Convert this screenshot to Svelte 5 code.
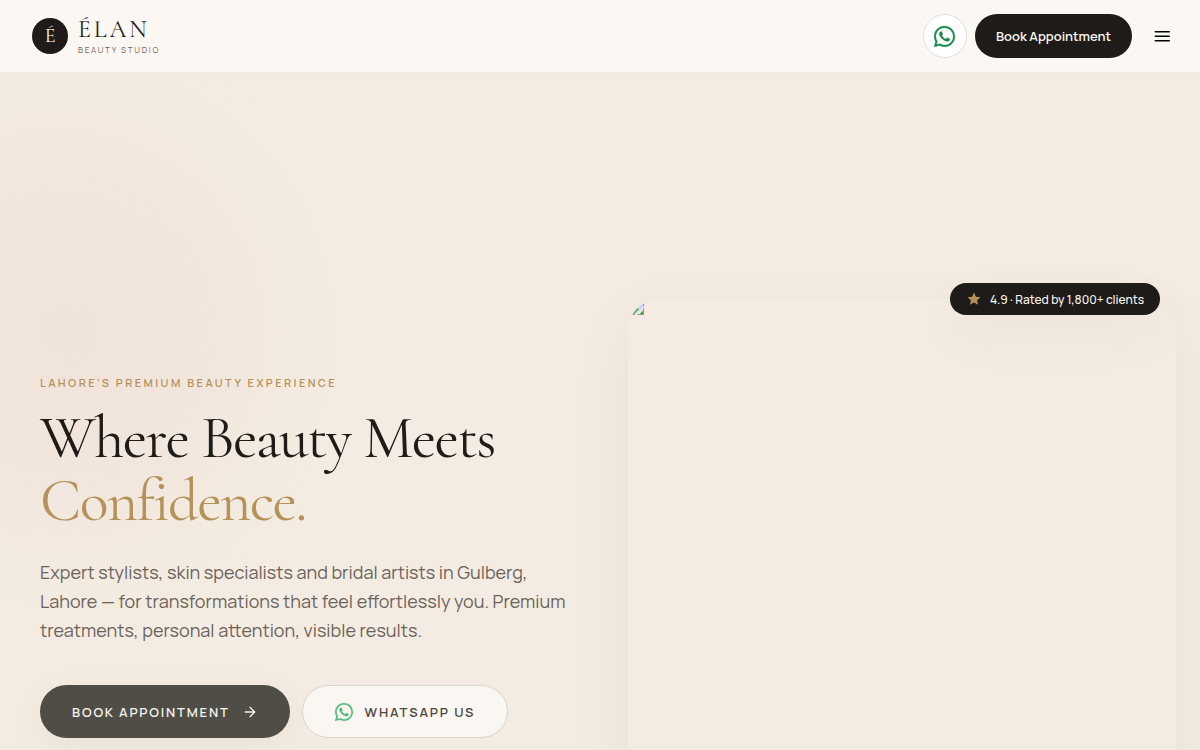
<script lang="ts">
  const brand = { initial: 'É', name: 'ÉLAN', tagline: 'Beauty Studio' };
  const rating = '4.9 · Rated by 1,800+ clients';

  let menuOpen = false;

  function toggleMenu() {
    menuOpen = !menuOpen;
  }
</script>

<svelte:head>
  <title>Élan Beauty Studio</title>
</svelte:head>

<div class="page">
  <header class="header">
    <a class="brand" href="#home">
      <span class="brand-mark">{brand.initial}</span>
      <span class="brand-text">
        <span class="brand-name">{brand.name}</span>
        <span class="brand-tagline">{brand.tagline}</span>
      </span>
    </a>

    <nav class="actions">
      <a class="icon-button" href="#whatsapp" aria-label="WhatsApp">
        <svg class="whatsapp" viewBox="0 0 24 24" width="21" height="21">
          <path
            d="M17.47 14.38c-.3-.15-1.76-.87-2.03-.97-.27-.1-.47-.15-.67.15-.2.3-.77.97-.94 1.16-.17.2-.35.22-.64.08-.3-.15-1.26-.47-2.39-1.48-.88-.79-1.48-1.76-1.65-2.06-.17-.3-.02-.46.13-.6.13-.14.3-.35.45-.53.15-.17.2-.3.3-.5.1-.2.05-.37-.03-.52-.07-.15-.67-1.61-.91-2.21-.24-.58-.49-.5-.67-.51l-.57-.01c-.2 0-.52.07-.79.37-.27.3-1.04 1.02-1.04 2.48s1.07 2.88 1.21 3.07c.15.2 2.1 3.2 5.08 4.49.71.31 1.26.49 1.69.63.71.22 1.36.19 1.87.12.57-.09 1.76-.72 2.01-1.41.25-.7.25-1.29.17-1.42-.07-.12-.27-.2-.57-.34M12.05 21.79a9.87 9.87 0 0 1-5.03-1.38l-.36-.22-3.74.98 1-3.65-.24-.37a9.86 9.86 0 0 1-1.51-5.26c0-5.45 4.44-9.88 9.89-9.88a9.82 9.82 0 0 1 6.99 2.9 9.83 9.83 0 0 1 2.89 6.99c0 5.45-4.44 9.89-9.89 9.89M20.46 3.49A11.82 11.82 0 0 0 12.05 0C5.5 0 .16 5.34.16 11.89c0 2.1.55 4.14 1.59 5.95L.06 24l6.3-1.65a11.88 11.88 0 0 0 5.69 1.45c6.55 0 11.89-5.34 11.89-11.9a11.82 11.82 0 0 0-3.48-8.41"
          />
        </svg>
      </a>
      <button class="book-small" type="button">Book Appointment</button>
      <button class="menu" type="button" aria-label="Menu" aria-expanded={menuOpen} on:click={toggleMenu}>
        <svg viewBox="0 0 20 20" width="20" height="20">
          <path d="M3.300 5.800h14M3.300 10.300h14M3.300 14.800h14" />
        </svg>
      </button>
    </nav>
  </header>

  <main class="hero" id="home">
    <section class="copy">
      <p class="eyebrow">Lahore's Premium Beauty Experience</p>
      <h1>Where Beauty Meets <em>Confidence.</em></h1>
      <p class="lead">
        Expert stylists, skin specialists and bridal artists in Gulberg, Lahore — for
        transformations that feel effortlessly you. Premium treatments, personal attention,
        visible results.
      </p>
      <div class="cta">
        <a class="button dark" href="#book">
          Book Appointment
          <svg class="arrow" viewBox="0 0 24 24" width="16" height="16">
            <path d="M5 12h14M12 5l7 7-7 7" />
          </svg>
        </a>
        <a class="button light" href="#whatsapp">
          <svg class="whatsapp" viewBox="0 0 24 24" width="18" height="18">
            <path
              d="M17.47 14.38c-.3-.15-1.76-.87-2.03-.97-.27-.1-.47-.15-.67.15-.2.3-.77.97-.94 1.16-.17.2-.35.22-.64.08-.3-.15-1.26-.47-2.39-1.48-.88-.79-1.48-1.76-1.65-2.06-.17-.3-.02-.46.13-.6.13-.14.3-.35.45-.53.15-.17.2-.3.3-.5.1-.2.05-.37-.03-.52-.07-.15-.67-1.61-.91-2.21-.24-.58-.49-.5-.67-.51l-.57-.01c-.2 0-.52.07-.79.37-.27.3-1.04 1.02-1.04 2.48s1.07 2.88 1.21 3.07c.15.2 2.1 3.2 5.08 4.49.71.31 1.26.49 1.69.63.71.22 1.36.19 1.87.12.57-.09 1.76-.72 2.01-1.41.25-.7.25-1.29.17-1.42-.07-.12-.27-.2-.57-.34M12.05 21.79a9.87 9.87 0 0 1-5.03-1.38l-.36-.22-3.74.98 1-3.65-.24-.37a9.86 9.86 0 0 1-1.51-5.26c0-5.45 4.44-9.88 9.89-9.88a9.82 9.82 0 0 1 6.99 2.9 9.83 9.83 0 0 1 2.89 6.99c0 5.45-4.44 9.89-9.89 9.89M20.46 3.49A11.82 11.82 0 0 0 12.05 0C5.5 0 .16 5.34.16 11.89c0 2.1.55 4.14 1.59 5.95L.06 24l6.3-1.65a11.88 11.88 0 0 0 5.69 1.45c6.55 0 11.89-5.34 11.89-11.9a11.82 11.82 0 0 0-3.48-8.41"
            />
          </svg>
          WhatsApp Us
        </a>
      </div>
    </section>

    <section class="visual">
      <div class="photo">
        <svg viewBox="0 0 16 16" width="16" height="16">
          <path d="M8 4h7v11H4z" fill="#c3d5f7" />
          <path d="M2 15 8 9l3 1-5 5z" fill="#4dab35" />
          <path d="M7 16 16 7v3l-6 6z" fill="#f4ece2" />
          <path d="m12 15 2-3 1 1v2z" fill="#4dab35" />
          <path d="M15 3h1v4l-1 1zM15 10l1-1v7H9l1-1h5zM4 15h3l-1 1H4z" fill="#8d9299" />
        </svg>
      </div>
      <div class="rating">
        <svg viewBox="0 0 24 24" width="14" height="14">
          <path d="m12 1 3.300 7 7.700 1-5.700 5.300 1.500 7.700-6.800-3.800L5.200 22l1.500-7.700L1 9l7.700-1z" />
        </svg>
        {rating}
      </div>
    </section>
  </main>
</div>

<style>
  :global(body) {
    margin: 0;
    background: #f4ece2;
  }

  .page {
    display: flex;
    flex-direction: column;
    height: 100vh;
    overflow: hidden;
    background: #f4ece2;
    color: #1f1b18;
    font-family: Manrope, Inter, sans-serif;
  }

  a {
    color: inherit;
    text-decoration: none;
  }

  button {
    border: 0;
    font-family: inherit;
    cursor: pointer;
  }

  .header {
    display: flex;
    flex: none;
    align-items: center;
    justify-content: space-between;
    height: 72px;
    padding: 0 16px 0 32px;
    background: #fbf8f3;
    border-bottom: 1px solid #efe9e0;
  }

  .brand {
    display: flex;
    align-items: center;
    gap: 10px;
  }

  .brand-mark {
    display: grid;
    place-items: center;
    width: 36px;
    height: 36px;
    border-radius: 50%;
    background: #1f1b18;
    color: #fbf8f3;
    font: 20px "Cormorant Garamond", "Liberation Serif", serif;
  }

  .brand-text {
    display: flex;
    flex-direction: column;
    gap: 4px;
  }

  .brand-name {
    font: 24px/24px "Cormorant Garamond", "Liberation Serif", serif;
    letter-spacing: 0.12em;
  }

  .brand-tagline {
    color: #6b635b;
    font-size: 8px;
    line-height: 8px;
    letter-spacing: 0.22em;
    text-transform: uppercase;
  }

  .actions {
    display: flex;
    align-items: center;
    gap: 8px;
  }

  .icon-button {
    display: grid;
    place-items: center;
    box-sizing: border-box;
    width: 44px;
    height: 44px;
    border: 1px solid #e0dfda;
    border-radius: 50%;
    background: #fff;
  }

  .whatsapp {
    overflow: visible;
    fill: #178a4c;
    stroke: #178a4c;
    stroke-width: 0.3;
  }

  .book-small {
    height: 44px;
    padding: 0 21px;
    border-radius: 22px;
    background: #1f1b18;
    color: #fbf8f3;
    font-size: 13px;
    font-weight: 600;
  }

  .menu {
    display: grid;
    place-items: center;
    width: 44px;
    height: 44px;
    padding: 0;
    background: none;
  }

  .menu svg,
  .arrow {
    fill: none;
    stroke: currentColor;
    stroke-width: 1.5;
    stroke-linecap: round;
    stroke-linejoin: round;
  }

  .arrow {
    stroke-width: 2;
  }

  .hero {
    display: grid;
    flex: 1;
    grid-template-columns: 1fr 1fr;
    align-items: start;
    gap: 56px;
    min-height: 0;
    padding: 226px 24px 0;
    background: radial-gradient(circle 340px at 60px 260px, #f0e3da, #f1e5dc 35%, #f3eae0 70%, #f4ece2);
  }

  .copy {
    padding: 76px 0 0 16px;
  }

  .eyebrow {
    margin: 0 0 16px;
    color: #b5925a;
    font-size: 11px;
    font-weight: 600;
    line-height: 16px;
    letter-spacing: 0.22em;
    text-transform: uppercase;
  }

  h1 {
    margin: 0 0 25px;
    font: 400 60px/63px "Cormorant Garamond", "Liberation Serif", serif;
    letter-spacing: -0.025em;
  }

  h1 em {
    display: block;
    color: #b5925a;
    font-style: normal;
  }

  .lead {
    margin: 0 0 40px;
    color: #6b635b;
    font-size: 18px;
    line-height: 29px;
  }

  .cta {
    display: flex;
    gap: 12px;
  }

  .button {
    display: flex;
    align-items: center;
    gap: 12px;
    box-sizing: border-box;
    height: 53px;
    padding: 0 32px;
    border-radius: 27px;
    font-size: 13px;
    font-weight: 600;
    letter-spacing: 0.14em;
    text-transform: uppercase;
    white-space: nowrap;
  }

  .dark {
    background: #504d47;
    color: #f4f1ec;
    box-shadow: 0 10px 36px rgba(80, 60, 40, 0.06);
  }

  .light {
    border: 1px solid #d9d5cc;
    background: #faf6f1;
    color: #4c4843;
  }

  .light .whatsapp {
    fill: #4fbc7c;
    stroke: #4fbc7c;
  }

  .visual {
    position: relative;
  }

  .photo {
    aspect-ratio: 4 / 5;
    overflow: hidden;
    border-radius: 32px;
    background: #f4ece2;
    box-shadow: 0 20px 60px rgba(80, 60, 40, 0.07);
  }

  .photo svg {
    display: block;
  }

  .rating {
    display: flex;
    position: absolute;
    top: -16px;
    right: 16px;
    align-items: center;
    gap: 9px;
    height: 32px;
    padding: 0 16px 0 17px;
    border-radius: 16px;
    background: #1f1b18;
    box-shadow: 0 20px 50px rgba(80, 60, 40, 0.05);
    color: #fbf8f3;
    font-size: 12px;
    font-weight: 500;
  }

  .rating svg {
    fill: #b5925a;
  }
</style>
